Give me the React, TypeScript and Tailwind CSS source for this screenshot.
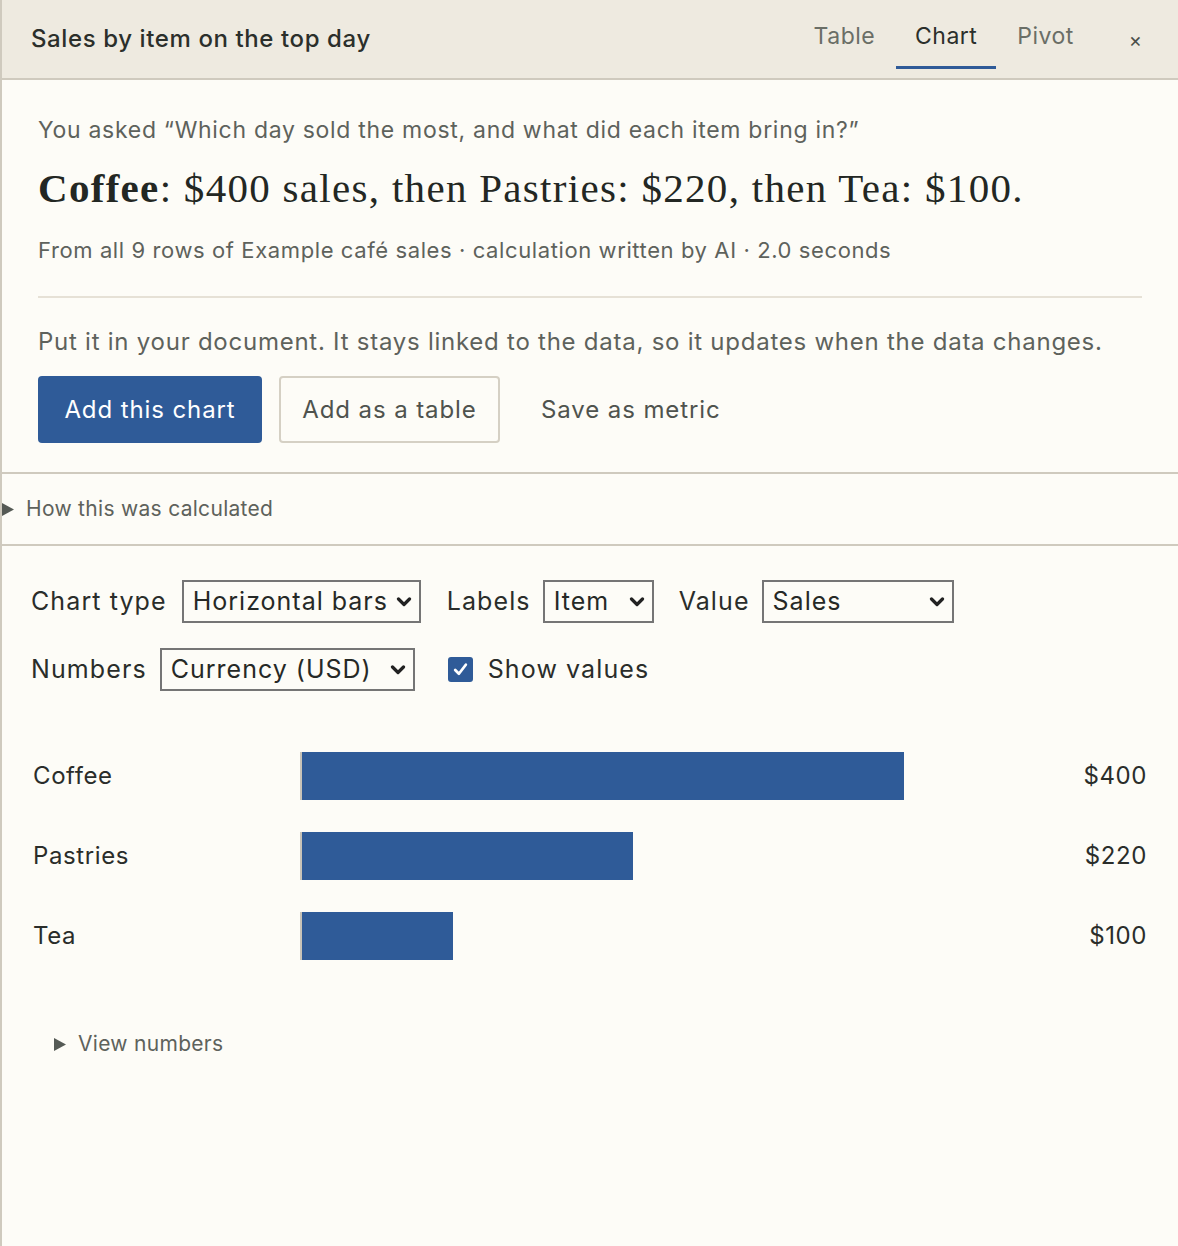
import { ChangeEvent, useState } from "react";

type Row = { label: string; value: number };

const rows: Row[] = [
    { label: "Coffee", value: 400 },
    { label: "Pastries", value: 220 },
    { label: "Tea", value: 100 },
];

// the largest bar is drawn this many px wide
const MAX_BAR = 602;

const Chevron = () => (
    <svg width="16" height="10" viewBox="0 0 16 10" className="pointer-events-none absolute right-[9px] top-1/2 -translate-y-1/2">
        <polyline points="2.5,2 8,7.5 13.5,2" fill="none" stroke="#222" strokeWidth="3.2" strokeLinecap="round" strokeLinejoin="round" />
    </svg>
);

const Select = ({ value, options, width }: { value: string; options: string[]; width: string }) => {
    const [current, setCurrent] = useState(value);
    return (
        <div className={`relative ${width}`}>
            <select
                value={current}
                onChange={(e: ChangeEvent<HTMLSelectElement>) => setCurrent(e.target.value)}
                className="w-full h-[43px] appearance-none bg-transparent border-2 border-[#757575] pl-[9px] pr-8 text-[25px] tracking-[1px] text-[#262926] outline-none"
            >
                {options.map((o) => (
                    <option key={o}>{o}</option>
                ))}
            </select>
            <Chevron />
        </div>
    );
};

const Triangle = () => (
    <svg width="12" height="13" viewBox="0 0 12 13">
        <polygon points="0,0 12,6.5 0,13" fill="#555a55" />
    </svg>
);

const App = () => {
    const [showValues, setShowValues] = useState(true);

    return (
        <div className="min-h-[1246px] bg-[#fdfcf7] border-l-2 border-[#cfcabe] font-['Inter',sans-serif] text-[#2a2d2a]">
            <header className="h-[80px] bg-[#eeeae0] border-b-2 border-[#cfcabe] flex items-stretch">
                <h1 className="self-center pl-[29px] text-[24px] font-medium tracking-[0.6px] text-[#2b2f2b]">Sales by item on the top day</h1>
                <nav className="ml-auto flex items-stretch gap-[2px] mb-[9px] text-[23px] tracking-[0.5px]">
                    <button className="px-[19px] pt-[6px] border-b-[3px] border-transparent text-[#6a6e66]">Table</button>
                    <button className="w-[100px] pt-[6px] border-b-[3px] border-[#2f5b98] text-[#2b2f2b]">Chart</button>
                    <button className="px-[19px] pt-[6px] border-b-[3px] border-transparent text-[#6a6e66]">Pivot</button>
                </nav>
                <button className="self-center ml-[36px] mr-[36px] mt-[2px] text-[20px] text-[#4a4e4a] leading-none">×</button>
            </header>

            <section className="px-[36px] pt-[35px] pb-[29px] border-b-2 border-[#cfcabe]">
                <p className="text-[23px] tracking-[0.7px] leading-[30px] text-[#5e625c]">You asked “Which day sold the most, and what did each item bring in?”</p>
                <p className="mt-[19px] font-['Liberation_Serif',serif] text-[41px] tracking-[1.3px] leading-[48px] text-[#232723]">
                    <b>Coffee</b>: $400 sales, then Pastries: $220, then Tea: $100.
                </p>
                <p className="mt-[23px] text-[22px] tracking-[0.6px] leading-[30px] text-[#5e625c]">From all 9 rows of Example café sales · calculation written by AI · 2.0 seconds</p>
                <div className="mt-[31px] border-t-2 border-[#e6e1d6]" />
                <p className="mt-[28px] text-[24px] tracking-[0.75px] leading-[32px] text-[#5e625c]">Put it in your document. It stays linked to the data, so it updates when the data changes.</p>
                <div className="mt-[18px] flex items-center gap-[17px] text-[24px] tracking-[0.9px]">
                    <button className="h-[67px] w-[224px] rounded-[4px] bg-[#2f5b98] text-white">Add this chart</button>
                    <button className="h-[67px] w-[221px] rounded-[4px] border-2 border-[#d5d0c4] text-[#4f534e]">Add as a table</button>
                    <button className="h-[67px] px-[24px] text-[#4f534e]">Save as metric</button>
                </div>
            </section>

            <div className="h-[72px] flex items-center gap-[12px] border-b-2 border-[#cfcabe] text-[21px] tracking-[0.3px] text-[#5e625c]">
                <Triangle />
                <span>How this was calculated</span>
            </div>

            <section className="pl-[29px] pr-[31px] pt-[34px]">
                <div className="flex items-center text-[25px] tracking-[1.1px]">
                    <span className="mr-[15px]">Chart type</span>
                    <Select value="Horizontal bars" options={["Horizontal bars", "Vertical bars", "Line", "Pie"]} width="w-[239px]" />
                    <span className="ml-[26px] mr-[12px]">Labels</span>
                    <Select value="Item" options={["Item", "Day"]} width="w-[111px]" />
                    <span className="ml-[25px] mr-[12px]">Value</span>
                    <Select value="Sales" options={["Sales", "Quantity"]} width="w-[192px]" />
                </div>
                <div className="mt-[25px] flex items-center text-[25px] tracking-[1.1px]">
                    <span className="mr-[13px]">Numbers</span>
                    <Select value="Currency (USD)" options={["Currency (USD)", "Number", "Percent"]} width="w-[255px]" />
                    <label className="ml-[33px] flex items-center gap-[15px] cursor-pointer">
                        <input type="checkbox" checked={showValues} onChange={() => setShowValues(!showValues)} className="sr-only" />
                        <span className={`w-[25px] h-[25px] rounded-[3px] flex items-center justify-center ${showValues ? "bg-[#2f5b98]" : "border-2 border-[#757575]"}`}>
                            {showValues && (
                                <svg width="17" height="17" viewBox="0 0 16 16">
                                    <polyline points="3,8.5 6.5,12 13,3.5" fill="none" stroke="#fff" strokeWidth="2.6" strokeLinecap="round" strokeLinejoin="round" />
                                </svg>
                            )}
                        </span>
                        <span>Show values</span>
                    </label>
                </div>

                <div className="mt-[45px]">
                    {rows.map((r) => (
                        <div key={r.label} className="h-[80px] flex items-center text-[24px] tracking-[0.6px]">
                            <span className="w-[269px] pl-[2px]">{r.label}</span>
                            <div className="flex-1 h-[48px] flex border-l-2 border-[#c8c3b8]">
                                <div className="h-full bg-[#2f5b98]" style={{ width: (r.value / 400) * MAX_BAR }} />
                            </div>
                            {showValues && <span className="w-[100px] text-right">${r.value}</span>}
                        </div>
                    ))}
                </div>

                <div className="mt-[54px] pl-[23px] flex items-center gap-[12px] text-[21px] tracking-[0.3px] leading-[28px] text-[#5e625c]">
                    <Triangle />
                    <span>View numbers</span>
                </div>
            </section>
        </div>
    );
};

export default App;
